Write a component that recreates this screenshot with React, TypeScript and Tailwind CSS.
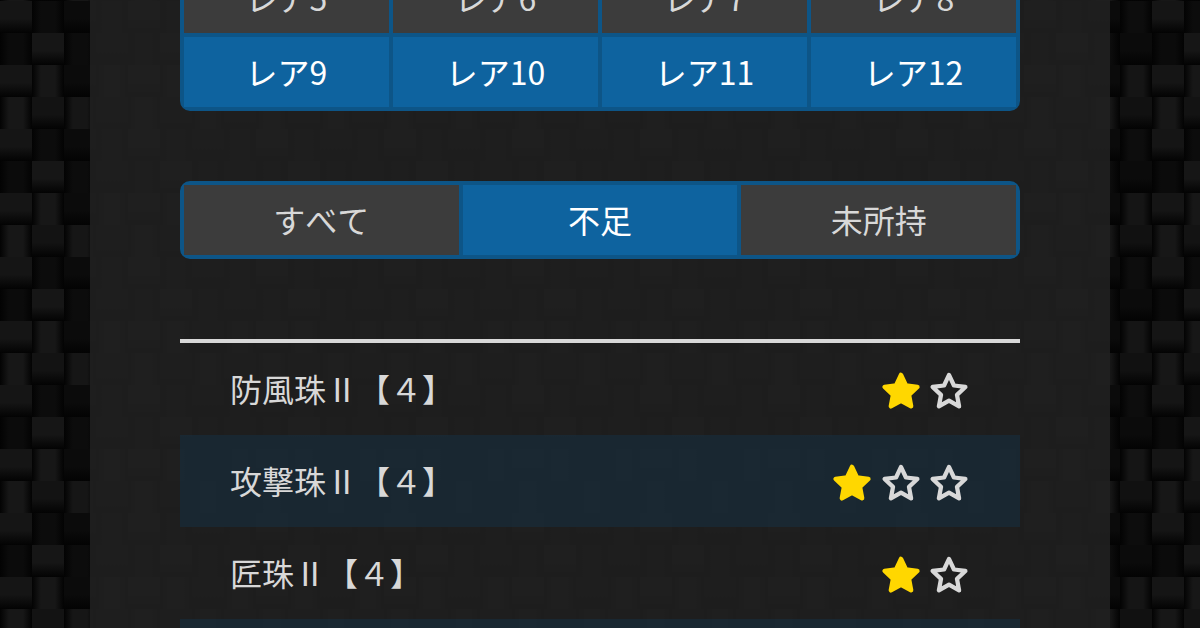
const RARITY_TOP = ['レア5', 'レア6', 'レア7', 'レア8'];
const RARITY_ACTIVE = ['レア9', 'レア10', 'レア11', 'レア12'];
const FILTERS = [
  { label: 'すべて', active: false },
  { label: '不足', active: true },
  { label: '未所持', active: false },
];
const DECORATIONS = [
  { name: '防風珠Ⅱ【４】', total: 2, striped: false },
  { name: '攻撃珠Ⅱ【４】', total: 3, striped: true },
  { name: '匠珠Ⅱ【４】', total: 2, striped: false },
  { name: '', total: 0, striped: true },
];

// peak grey of each weave cell, the tile repeats every 4 cells
const WEAVE = [
  [0x15, 0x0c, 0x0b, 0x0d],
  [0x0b, 0x16, 0x0c, 0x0b],
  [0x15, 0x17, 0x0b, 0x15],
  [0x17, 0x13, 0x16, 0x11],
];
const CELLS = Array.from({ length: 21 * 38 }, (_, i) => {
  const row = Math.floor(i / 38);
  const col = i % 38;
  // row 0 sits above the page, so it lines up with the last tile row
  const peak = WEAVE[(row + 3) % 4][col % 4];
  const grey = `rgb(${peak},${peak},${peak})`;
  const isVertical = (row + 3 + col) % 2 === 0;
  return isVertical
    ? `linear-gradient(to bottom, ${grey} 0, ${grey} 55%, #030303 100%)`
    : `linear-gradient(to right, #030303 0, ${grey} 28%, ${grey} 72%, #030303 100%)`;
});

const STAR_POINTS = '20,5.5 24.4,14.9 34.6,16.2 27.1,23.2 29,33.4 20,28.4 11,33.4 12.9,23.2 5.4,16.2 15.6,14.9';

function Star({ filled }: { filled: boolean }) {
  return (
    <svg viewBox="2.2 2 35.6 35.6" className="h-10 w-10 shrink-0">
      <polygon
        points={STAR_POINTS}
        fill={filled ? '#ffd700' : 'none'}
        stroke={filled ? '#ffd700' : '#d8d8d8'}
        strokeWidth={filled ? 4 : 3.8}
        strokeLinejoin="round"
      />
    </svg>
  );
}

function Cell({ label, active }: { label: string; active: boolean }) {
  return (
    <div
      className={`flex h-[70px] items-center justify-center pb-[3px] text-[32px] ${active ? 'bg-[#0e639f] text-white' : 'bg-[#3c3c3c] text-[#d8d8d8]'}`}
    >
      {label}
    </div>
  );
}

export default function App() {
  return (
    <div className="relative flex h-[628px] w-[1200px] justify-center overflow-hidden bg-black font-['Noto_Sans_CJK_JP','Noto_Sans',sans-serif] [font-kerning:none]">
      <div className="pointer-events-none absolute -top-[31px] left-0 grid grid-cols-[repeat(38,32px)] auto-rows-[32px]">
        {CELLS.map((background, i) => (
          <div key={i} style={{ background }} />
        ))}
      </div>
      <main className="relative flex h-full w-[1020px] flex-col bg-[#202020]/90 px-[90px]">
        <div className="-mt-[41px] grid grid-cols-4 gap-1 rounded-[10px] border-4 border-[#0d5587] bg-[#0d5587]">
          {RARITY_TOP.map((label) => (
            <Cell key={label} label={label} active={false} />
          ))}
          {RARITY_ACTIVE.map((label) => (
            <Cell key={label} label={label} active />
          ))}
        </div>

        <div className="mt-[70px] grid grid-cols-3 gap-1 rounded-[10px] border-4 border-[#0d5587] bg-[#0d5587]">
          {FILTERS.map((item) => (
            <Cell key={item.label} label={item.label} active={item.active} />
          ))}
        </div>

        <ul className="mt-20 border-t-4 border-[#d8d8d8]">
          {DECORATIONS.map((item, index) => (
            <li
              key={index}
              className={`flex h-[92px] shrink-0 items-center justify-between pl-[50px] pr-[51px] text-[32px] text-[#d8d8d8] ${item.striped ? 'bg-[#104060]/30' : ''}`}
            >
              <span className="mb-[2px]">{item.name}</span>
              <span className="flex gap-[8.5px] pt-1">
                {Array.from({ length: item.total }, (_, i) => (
                  <Star key={i} filled={i === 0} />
                ))}
              </span>
            </li>
          ))}
        </ul>
      </main>
    </div>
  );
}
